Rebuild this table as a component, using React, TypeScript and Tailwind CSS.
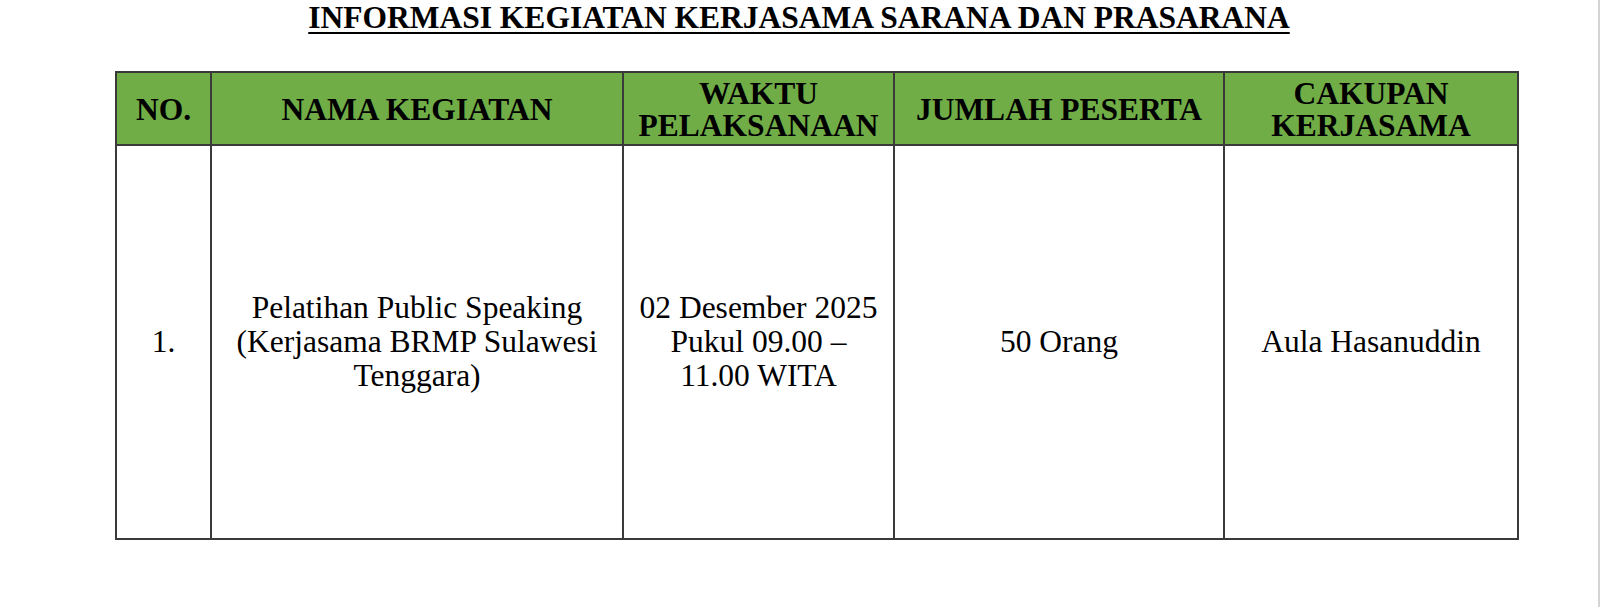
import React from 'react';

const HEADERS = [
  { label: ['NO.'], width: 'w-[95px]' },
  { label: ['NAMA KEGIATAN'], width: 'w-[412px]' },
  { label: ['WAKTU', 'PELAKSANAAN'], width: 'w-[271px]' },
  { label: ['JUMLAH PESERTA'], width: 'w-[330px]' },
  { label: ['CAKUPAN', 'KERJASAMA'], width: 'w-[294px]' },
];

const ROWS = [
  [
    ['1.'],
    ['Pelatihan Public Speaking', '(Kerjasama BRMP Sulawesi', 'Tenggara)'],
    ['02 Desember 2025', 'Pukul 09.00 –', '11.00 WITA'],
    ['50 Orang'],
    ['Aula Hasanuddin'],
  ],
];

const App: React.FC = () => {
  return (
    <div className="w-[1600px] h-[607px] bg-white border-r-2 border-r-[#d4d4d4] font-['Liberation_Serif','Times_New_Roman',serif] text-black">
      <h1 className="text-center text-[31.5px] leading-[36px] font-bold underline decoration-2 underline-offset-[4px]">
        INFORMASI KEGIATAN KERJASAMA SARANA DAN PRASARANA
      </h1>

      <table className="mt-[35px] ml-[115px] w-[1402px] table-fixed border-collapse border-2 border-[#3a3a3a]">
        <thead>
          <tr className="bg-[#70ad47] h-[73px]">
            {HEADERS.map((h, i) => (
              <th
                key={i}
                className={`${h.width} border-2 border-[#3a3a3a] px-1 pt-[3px] text-center align-middle text-[31.5px] font-bold leading-[32px]`}
              >
                {h.label.map((l) => (
                  <div key={l}>{l}</div>
                ))}
              </th>
            ))}
          </tr>
        </thead>
        <tbody>
          {ROWS.map((row, r) => (
            <tr key={r} className="h-[394px]">
              {row.map((cell, c) => (
                <td
                  key={c}
                  className="border-2 border-[#3a3a3a] px-1 text-center align-middle text-[31.5px] leading-[34px]"
                >
                  {cell.map((l) => (
                    <div key={l}>{l}</div>
                  ))}
                </td>
              ))}
            </tr>
          ))}
        </tbody>
      </table>
    </div>
  );
};

export default App;
